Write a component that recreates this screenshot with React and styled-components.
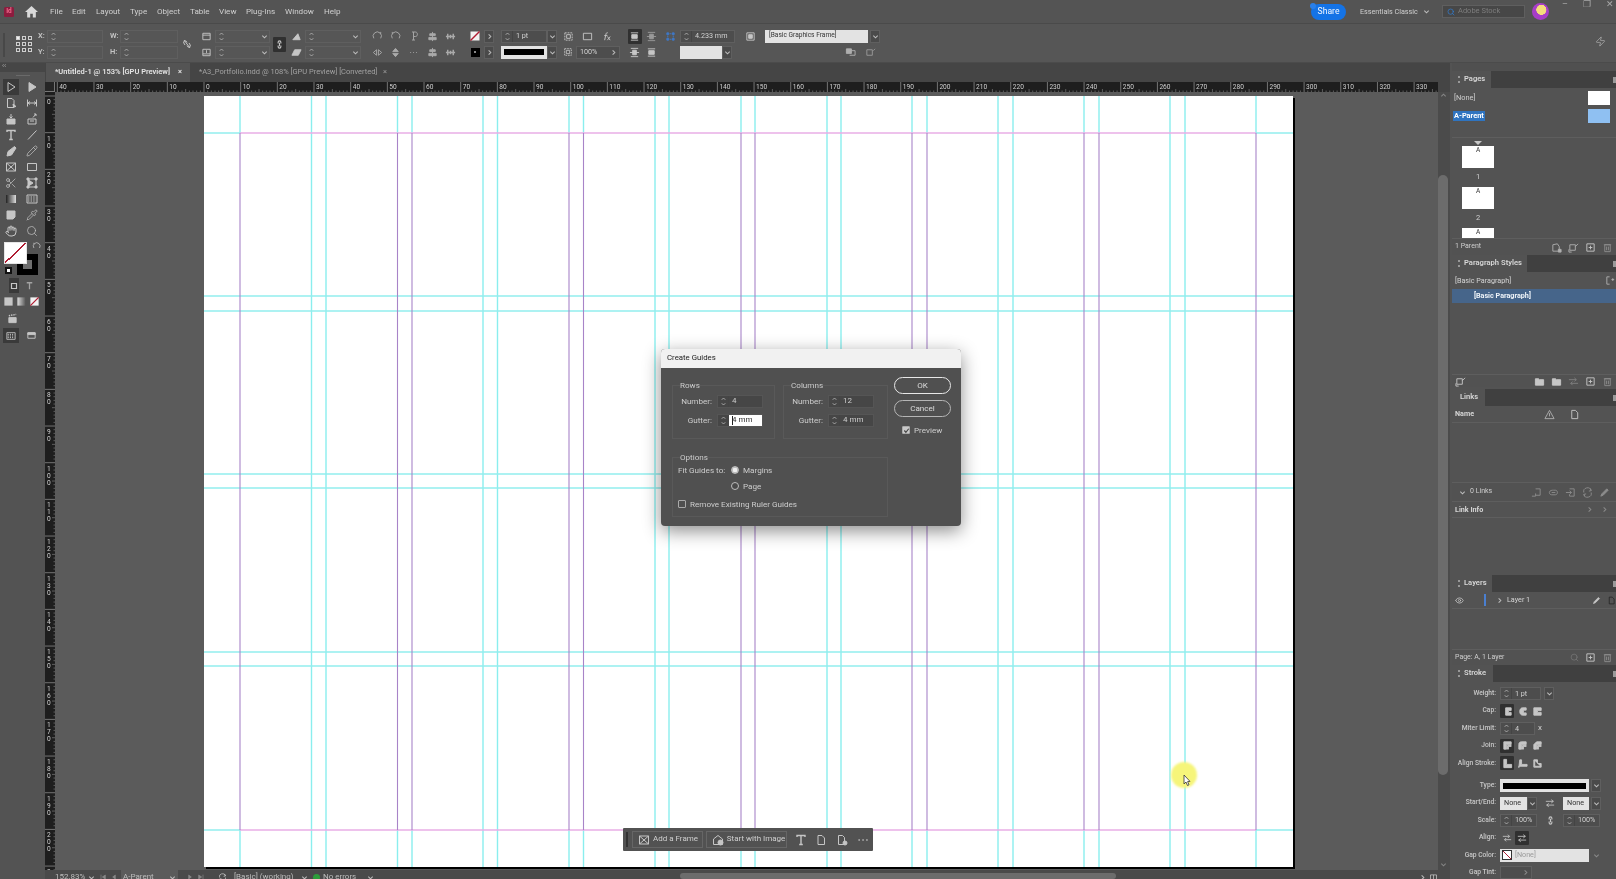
import React from "react";
import styled, { createGlobalStyle } from "styled-components";
import { Scissors, Pipette, Hand, Search, Pencil, Eye, Zap } from "lucide-react";

const GlobalStyle = createGlobalStyle`
  html, body { margin: 0; padding: 0; background: #535353; overflow: hidden; }
  * { box-sizing: border-box; }
`;

// page geometry, taken from the rulers: 297 x 210 mm at 3.667px per mm
const PX_PER_MM = 3.667;
const PAGE_W = 1089;
const PAGE_H = 771;
const MARGIN = { left: 36, right: 1052, top: 37, bottom: 734 };
const ROW_GUIDES = [200, 215, 378, 392, 556, 570];
const COL_GUIDES = [107.5, 122, 279, 293.5, 451, 465, 623, 637, 794, 809, 966, 981];
const PURPLE_GUIDES = [36, 193.5, 208, 365, 379.5, 537, 551, 708, 723, 880, 895, 1052];

const MENU = [
  ["File", 50], ["Edit", 72], ["Layout", 96], ["Type", 130], ["Object", 157],
  ["Table", 190], ["View", 219], ["Plug-Ins", 246], ["Window", 285], ["Help", 324],
];

const glyphs = {
  home: <path d="M6 1 L12 6.5 H10 V11.5 H7.2 V8 H4.8 V11.5 H2 V6.5 H0 Z" fill="currentColor" stroke="none" />,
  select: <path d="M3 1.5 V10.5 L10 6 Z" />,
  direct: <path d="M3 1.5 V10.5 L10 6 Z" fill="currentColor" />,
  page: <><path d="M2.5 1.5 H7 L9 3.5 V10.5 H2.5 Z" /><path d="M8 7 L11 9.5 L8.5 10 Z" fill="currentColor" /></>,
  gap: <path d="M1.5 2.5 V9.5 M10.5 2.5 V9.5 M2 6 H10 M2 6 L4 4.5 M2 6 L4 7.5 M10 6 L8 4.5 M10 6 L8 7.5" />,
  collect: <><path d="M2 6 H10 V11 H2 Z" fill="currentColor" /><path d="M6 1 V5 M4.5 3.5 L6 5 L7.5 3.5" /></>,
  place: <><path d="M2 6 H10 V11 H2 Z M4 8 H8" /><path d="M7 4.5 L10 1 M8 1 H10 V3" /></>,
  type: <path d="M2 3 V1.5 H10 V3 M6 1.5 V10.5 M4.2 10.5 H7.8" strokeWidth="1.4" />,
  line: <path d="M2 10.5 L10.5 1.5" />,
  pen: <path d="M9.5 1.5 L11 3 L6.5 10 L2 11 L3 6.5 Z" fill="currentColor" />,
  frameX: <path d="M1.5 2 H10.5 V10 H1.5 Z M1.5 2 L10.5 10 M10.5 2 L1.5 10" />,
  rect: <path d="M1.5 2.5 H10.5 V9.5 H1.5 Z" />,
  free: <><path d="M2 2 H10 V10 H2 Z" /><path d="M1 1 H3 V3 H1 Z M9 9 H11 V11 H9 Z M9 1 H11 V3 H9 Z M1 9 H3 V11 H1 Z" fill="currentColor" /><path d="M2.5 3 L7 6 L2.5 9 Z" fill="currentColor" /></>,
  gradient: <><defs><linearGradient id="grad"><stop offset="0" stopColor="#222" /><stop offset="1" stopColor="#ddd" /></linearGradient></defs><rect x="1" y="2" width="10" height="8" fill="url(#grad)" stroke="none" /></>,
  feather: <><path d="M1 2 H11 V10 H1 Z" /><path d="M2 4 H10 M2 6 H10 M2 8 H10" strokeDasharray="1.4 1.2" strokeWidth="1.2" /></>,
  note: <path d="M2 2 H10 V8 L8 10 H2 Z" fill="currentColor" />,
  normal: <path d="M3 3 H9 V9 H3 Z" strokeWidth="1.4" />,
  t: <path d="M3 3 H9 M6 3 V10" strokeWidth="1.4" />,
  solid: <rect x="1.5" y="1.5" width="9" height="9" fill="currentColor" stroke="none" />,
  grad2: <><defs><linearGradient id="grad2"><stop offset="0" stopColor="#ddd" /><stop offset="1" stopColor="#555" /></linearGradient></defs><rect x="1.5" y="1.5" width="9" height="9" fill="url(#grad2)" stroke="none" /></>,
  none: <><rect x="1.5" y="1.5" width="9" height="9" fill="#f2f2f2" stroke="none" /><path d="M1.5 10.5 L10.5 1.5" stroke="#b01c32" strokeWidth="1.4" /></>,
  clap: <><path d="M2 5 H10 V10.5 H2 Z" fill="currentColor" /><path d="M2 3 L10 1.5" strokeDasharray="1.5 1" strokeWidth="1.6" /></>,
  view: <><path d="M2 3 H10 V9 H2 Z" /><path d="M2 3 H10 V5 H2 Z" fill="currentColor" /></>,
  unlink: <path d="M3 2 L9 10 M4 7 L2.8 5 C2 3.6 4 2 5.2 3.2 L6 4.4 M8 5 L9.2 7 C10 8.4 8 10 6.8 8.8 L6 7.6" />,
  chain: <path d="M4.5 5 V3.5 C4.5 1.5 7.5 1.5 7.5 3.5 V5 M4.5 7 V8.5 C4.5 10.5 7.5 10.5 7.5 8.5 V7 M6 4 V8" strokeWidth="1.2" />,
  box: <><path d="M2 2.5 H10 V9.5 H2 Z" /><path d="M2 4.5 H10" /></>,
  boxDown: <><path d="M2 2.5 H10 V9.5 H2 Z" /><path d="M2 7.5 H10 M6 3.5 V6.5" /></>,
  shear: <path d="M4 3 H11 L8 9 H1 Z" fill="currentColor" />,
  angle: <path d="M2 9.5 H10 L7.5 3 Z" fill="currentColor" />,
  rotR: <path d="M2 8 A4.5 4.5 0 1 1 9.5 8 M9.5 3 V1" />,
  rotL: <path d="M10 8 A4.5 4.5 0 1 0 2.5 8 M2.5 3 V1" />,
  flipH: <path d="M5 3 L1.5 6 L5 9 Z M7 3 L10.5 6 L7 9 Z" />,
  flipV: <path d="M3 5 L6 1.5 L9 5 Z M3 7 L6 10.5 L9 7 Z" fill="currentColor" />,
  p: <path d="M4 2 H7.5 C10 2 10 6.5 7.5 6.5 H5.5 M5.5 2 V10 M4 10 H7" />,
  distrib: <path d="M6 1 V11 M3 3 H9 V5 H3 Z M2 7 H10 V9.5 H2 Z" fill="currentColor" />,
  distrib2: <path d="M1 6 H11 M3 3 V9 M6 4 V8 M9 3 V9" strokeWidth="1.6" />,
  fit: <><path d="M2 2 H10 V10 H2 Z" strokeDasharray="2 1" /><path d="M4 4 H8 V8 H4 Z" /></>,
  fx: <path d="M4 10 L5.5 3 C5.8 1.8 7 1.8 7.5 2 M3.5 5 H7 M7 6 L10 10 M10 6 L7 10" />,
  alignTop: <><path d="M2 2 H10 M2 10 H10" /><path d="M3 4 H9 V8 H3 Z" fill="currentColor" /></>,
  alignMid: <><path d="M1 6 H11 M2 1.5 H10 M2 10.5 H10" /><path d="M4 3.5 H8 V8.5 H4 Z" fill="currentColor" /></>,
  gridBlue: <path d="M2 2 H4 V4 H2 Z M8 2 H10 V4 H8 Z M2 8 H4 V10 H2 Z M8 8 H10 V10 H8 Z M5 3 H7 M5 9 H7 M3 5 V7 M9 5 V7" fill="currentColor" />,
  styleBox: <><path d="M2 2 H10 V10 H2 Z" /><path d="M4 4 H8 V8 H4 Z" fill="currentColor" /></>,
  ovr: <><path d="M1.5 2 H7 V7 H1.5 Z" fill="currentColor" /><path d="M7 4 H11 V9 H5" /></>,
  ovr2: <path d="M2 3 H8 V9 H2 Z M9 4 L11 2" />,
  plus: <><path d="M2 2 H10 V10 H2 Z" /><path d="M6 4 V8 M4 6 H8" /></>,
  trash: <path d="M3 3 H9 V10.5 H3 Z M2 3 H10 M5 5 V9 M7 5 V9" />,
  pageMove: <><path d="M2 3 H8 V9 H2 Z" /><path d="M1 8 L1 11 H4 M8 5 L11 2" /></>,
  addPage: <><path d="M2 3 L7 2 L9 5 V10 H2 Z" /><path d="M8 8 H11 V11 H8 Z" fill="currentColor" /></>,
  folder: <path d="M1.5 3 H5 L6 4 H10.5 V10 H1.5 Z" fill="currentColor" />,
  warn: <><path d="M6 1.5 L11 10.5 H1 Z" /><path d="M6 4.5 V8" /></>,
  doc: <path d="M3 1.5 H7 L9.5 4 V10.5 H3 Z" />,
  docGear: <><path d="M2.5 1.5 H6.5 L8.5 3.5 V10.5 H2.5 Z" /><circle cx="9" cy="9" r="2" fill="currentColor" /></>,
  relink: <path d="M1 10 H5 V7 M5 2 H10 V9 H5" />,
  linkOval: <path d="M1.5 6 C1.5 3.5 5 3.5 6 3.5 H8 C11 3.5 11 8.5 8 8.5 H4 C1.5 8.5 1.5 6 1.5 6 Z M4 6 H8" />,
  gotoLink: <path d="M5 2 H10 V10 H5 V8 M1 6 H7 M5 4 L7 6 L5 8" />,
  refresh: <path d="M2 6 A4 4 0 0 1 10 4 M10 6 A4 4 0 0 1 2 8 M9 1.5 L10 4 L7.5 4.5 M3 10.5 L2 8 L4.5 7.5" />,
  edit: <path d="M2 10 L3 7.5 L8.5 2 L10 3.5 L4.5 9 Z" fill="currentColor" />,
  capButt: <path d="M4 2 H10 V5 H7 V7 H10 V10 H4 Z" fill="currentColor" />,
  capRound: <path d="M10 2 H6 C2 2 2 10 6 10 H10 V7.5 H7 V4.5 H10 Z" fill="currentColor" />,
  capSquare: <path d="M2 2 H10 V5 H6 V7 H10 V10 H2 Z" fill="currentColor" />,
  joinMiter: <path d="M2 2 H10 V5 H5 V10 H2 Z M6 6 H10 V7 H7 V10 H6 Z" fill="currentColor" />,
  joinRound: <path d="M5 2 H10 V5 H5 V10 H2 V5 C2 3 3 2 5 2 Z M6 6 H10 V7 H7 V10 H6 Z" fill="currentColor" />,
  joinBevel: <path d="M5 2 H10 V5 H5 V10 H2 V5 Z M6 6 H10 V7 H7 V10 H6 Z" fill="currentColor" />,
  alignIn: <path d="M2 1.5 H5 V7 H10.5 V10.5 H2 Z" fill="currentColor" />,
  alignCenter: <path d="M3 2 H5 V7 H11 V9 H2 V10.5 Z" fill="currentColor" />,
  alignOut: <path d="M2 2 H6 V6 H10 V10 H2 Z M3 3 V9 H9" fill="currentColor" />,
  swap: <path d="M1 4 H10 M7.5 2 L10 4 L7.5 6 M11 8.5 H2 M4.5 6.5 L2 8.5 L4.5 10.5" />,
  arrows: <path d="M1 4 H9 M7 2 L9 4 L7 6 M11 8 H3 M5 6 L3 8 L5 10" />,
  dots: <path d="M1.5 6 H2.8 M5.4 6 H6.7 M9.3 6 H10.6" strokeWidth="1.6" />,
  image: <><path d="M1.5 5 L6 1.5 L10.5 5 V10.5 H1.5 Z" /><circle cx="8.5" cy="8.5" r="2.5" fill="currentColor" /></>,
  first: <path d="M3 2.5 V9.5 M9.5 3 L5 6 L9.5 9 Z" fill="currentColor" />,
  prev: <path d="M8 3 L4 6 L8 9 Z" fill="currentColor" />,
  next: <path d="M4 3 L8 6 L4 9 Z" fill="currentColor" />,
  last: <path d="M9 2.5 V9.5 M2.5 3 L7 6 L2.5 9 Z" fill="currentColor" />,
  para: <path d="M2 2 V10 M2 2 H5 M2 10 H5 M7 5 H10 M8.5 3.5 V6.5" />,
  splitView: <path d="M2 2.5 H10 V9.5 H2 Z M6 2.5 V9.5" />,
};

const CHEVRONS = {
  down: "M1.5 3 L4 5.5 L6.5 3",
  up: "M1.5 5 L4 2.5 L6.5 5",
  right: "M3 1.5 L5.5 4 L3 6.5",
};

const Svg = styled.svg`
  flex: none;
  display: block;
  color: ${(p) => p.$color || "#c6c6c6"};
  opacity: ${(p) => p.$dim || 1};
`;

const Icon = ({ name, size = 11, color, dim }) => (
  <Svg viewBox="0 0 12 12" width={size} height={size} fill="none" stroke="currentColor" strokeWidth="1" $color={color} $dim={dim}>
    {glyphs[name]}
  </Svg>
);

const Chevron = ({ dir = "down", size = 7, color = "#bdbdbd" }) => (
  <Svg viewBox="0 0 8 8" width={size} height={size} fill="none" stroke="currentColor" strokeWidth="1.2" $color={color}>
    <path d={CHEVRONS[dir]} />
  </Svg>
);

const SpinnerBox = styled.span`
  flex: none;
  width: ${(p) => p.$w || 11}px;
  height: 100%;
  display: flex;
  align-items: center;
  justify-content: center;
  border-right: 1px solid ${(p) => (p.$flat ? "transparent" : "#444")};
`;

const Spinner = ({ w, flat }) => (
  <SpinnerBox $w={w} $flat={flat}>
    <Svg viewBox="0 0 8 12" width="7" height="11" fill="none" stroke="currentColor" strokeWidth="1" $color="#b5b5b5">
      <path d="M2 4 L4 2 L6 4 M2 8 L4 10 L6 8" />
    </Svg>
  </SpinnerBox>
);

/* ---------- shell ---------- */

const Shell = styled.div`
  position: relative;
  width: 1616px;
  height: 879px;
  overflow: hidden;
  display: flex;
  flex-direction: column;
  background: #535353;
  color: #d4d4d4;
  font-family: Roboto, "Noto Sans", sans-serif;
  font-size: 8px;
  line-height: 1.1;
  filter: blur(0.35px);
`;

const MenuBar = styled.div`
  flex: none;
  height: 24px;
  display: flex;
  align-items: center;
  background: #545454;
  border-bottom: 1px solid #4a4a4a;
  padding-left: 4px;
`;

const Logo = styled.div`
  flex: none;
  width: 10px;
  height: 10px;
  border-radius: 1.5px;
  background: #8d1c3e;
  color: #f06a8c;
  font-size: 6.5px;
  font-weight: 700;
  display: flex;
  align-items: center;
  justify-content: center;
`;

const HomeSlot = styled.div`
  margin-left: 11px;
  width: 13px;
`;

const MenuList = styled.nav`
  flex: none;
  width: 320px;
  position: relative;
  height: 12px;
  margin-left: 2px;
`;

const MenuItem = styled.span`
  position: absolute;
  top: 1px;
  left: ${(p) => p.$x - 40}px;
  font-size: 8.1px;
  color: #cfcfcf;
`;

const MenuRight = styled.div`
  margin-left: auto;
  display: flex;
  align-items: center;
  height: 100%;
`;

const ShareBtn = styled.div`
  position: relative;
  width: 35px;
  height: 16px;
  border-radius: 8px;
  background: #1473e6;
  color: #f4f8ff;
  font-size: 8.6px;
  display: flex;
  align-items: center;
  justify-content: center;
  &::before {
    content: "";
    position: absolute;
    left: -1px;
    top: -1px;
    width: 6px;
    height: 6px;
    border-radius: 50%;
    background: #2a80ea;
  }
`;

const WorkspaceMenu = styled.div`
  margin-left: 14px;
  width: 82px;
  display: flex;
  align-items: center;
  justify-content: space-between;
  padding-right: 12px;
  font-size: 7.2px;
  color: #cfcfcf;
  white-space: nowrap;
`;

const StockField = styled.div`
  width: 83px;
  height: 13px;
  background: #474747;
  border: 1px solid #5f5f5f;
  display: flex;
  align-items: center;
  gap: 3px;
  padding-left: 4px;
  font-size: 7.5px;
  color: #7d7d7d;
`;

const Avatar = styled.div`
  margin-left: 7px;
  width: 17px;
  height: 17px;
  border-radius: 50%;
  background: radial-gradient(circle at 55% 40%, #f4dc7c 0 35%, #a73dc8 38%);
`;

const WinBtns = styled.div`
  margin-left: 5px;
  width: 62px;
  height: 10px;
  align-self: flex-start;
  display: flex;
  justify-content: space-between;
  align-items: center;
  padding: 0 2px 0 8px;
  font-size: 9px;
  color: #a8a8a8;
`;

/* ---------- control bar ---------- */

const ControlBar = styled.div`
  flex: none;
  height: 39px;
  display: flex;
  padding: 4px 0 0 3px;
  background: #565656;
  border-bottom: 1px solid #4b4b4b;
`;

const Handle = styled.div`
  width: 2px;
  height: 24px;
  margin-top: 5px;
  background: #484848;
`;

const RefGrid = styled.div`
  margin: 8px 0 0 11px;
  width: 16px;
  height: 16px;
  display: grid;
  grid-template-columns: repeat(3, 4px);
  grid-auto-rows: 4px;
  gap: 2px;
`;

const RefCell = styled.span`
  border: 1px solid #cfcfcf;
  background: ${(p) => (p.$on ? "#eee" : "transparent")};
`;

const CtlCol = styled.div`
  flex: none;
  margin-left: ${(p) => p.$ml || 0}px;
  width: ${(p) => p.$w}px;
  display: grid;
  grid-template-rows: 16px 16px;
  grid-template-columns: ${(p) => p.$cols || "1fr"};
`;

const CtlRow = styled.div`
  display: flex;
  align-items: center;
  gap: ${(p) => p.$gap || 0}px;
  justify-content: ${(p) => p.$justify || "flex-start"};
  padding-right: ${(p) => p.$pr || 0}px;
  font-size: 7.5px;
  font-weight: 600;
  color: #c4c4c4;
`;

const CtlLabel = styled.span`
  flex: none;
  width: ${(p) => p.$w}px;
`;

const CtlCell = styled.div`
  display: flex;
  align-items: center;
  justify-content: center;
  grid-row: ${(p) => (p.$tall ? "1 / 3" : "auto")};
`;

const IconBtn = styled.span`
  flex: none;
  width: ${(p) => p.$w || 14}px;
  height: ${(p) => p.$h || 14}px;
  display: inline-flex;
  align-items: center;
  justify-content: center;
  background: ${(p) => (p.$on ? "#303030" : "transparent")};
  border-radius: 1px;
`;

const MiniField = styled.div`
  flex: ${(p) => (p.$w ? "none" : "1")};
  width: ${(p) => (p.$w ? `${p.$w}px` : "auto")};
  height: 13px;
  margin-left: ${(p) => p.$ml || 0}px;
  padding-right: ${(p) => p.$pr || 0}px;
  display: flex;
  align-items: center;
  justify-content: ${(p) => (p.$end ? "flex-end" : "flex-start")};
  background: ${(p) => (p.$light ? "#e3e3e3" : p.$clear ? "transparent" : "#4d4d4d")};
  border: 1px solid ${(p) => (p.$light ? "#e3e3e3" : "#5f5f5f")};
  color: ${(p) => (p.$light ? "#333" : "#d2d2d2")};
  font-size: 7.2px;
  font-weight: 400;
`;

const FieldText = styled.span`
  flex: 1;
  padding-left: 3px;
  white-space: nowrap;
  font-size: ${(p) => (p.$fs ? `${p.$fs}px` : "inherit")};
  color: ${(p) => p.$color || "inherit"};
`;

const DropBox = styled.span`
  flex: none;
  width: ${(p) => p.$w || 10}px;
  height: 13px;
  margin-left: ${(p) => p.$ml || 0}px;
  display: flex;
  align-items: center;
  justify-content: center;
  background: ${(p) => (p.$clear ? "transparent" : "#4a4a4a")};
  border: 1px solid ${(p) => (p.$clear ? "transparent" : "#5f5f5f")};
`;

const StrokeBar = styled.div`
  flex: 1;
  height: 6px;
  margin: 0 2px;
  background: #000;
`;

const SmallSwatch = styled.span`
  flex: none;
  width: 9px;
  height: 9px;
  background: #000;
  border: 1px solid #000;
  display: flex;
  align-items: center;
  justify-content: center;
  &::after {
    content: "";
    width: 2px;
    height: 2px;
    background: #888;
  }
`;

const FlashSlot = styled.div`
  margin: 8px 10px 0 auto;
`;

/* ---------- middle ---------- */

const Middle = styled.div`
  flex: 1;
  min-height: 0;
  display: flex;
`;

const ToolColumn = styled.aside`
  flex: none;
  width: 45px;
  display: flex;
  flex-direction: column;
  background: #535353;
`;

const CollapseStrip = styled.div`
  height: 9px;
  background: #464646;
  color: #aaa;
  font-size: 7px;
  padding-left: 2px;
`;

const ToolHandle = styled.div`
  height: 7px;
  display: flex;
  align-items: center;
  justify-content: center;
  &::after {
    content: "";
    width: 14px;
    height: 1px;
    background: #6a6a6a;
  }
`;

const ToolRow = styled.div`
  display: grid;
  grid-template-columns: 22px 19px;
  height: 16px;
`;

const ToolBtn = styled.span`
  display: flex;
  align-items: center;
  justify-content: center;
  margin: 0 ${(p) => (p.$on ? 3 : 0)}px;
  background: ${(p) => (p.$on ? "#3a3a3a" : "transparent")};
`;

const ColorWell = styled.div`
  position: relative;
  flex: none;
  height: 36px;
  margin-top: 3px;
`;

const FillBox = styled.div`
  position: absolute;
  z-index: 1;
  left: 4px;
  top: 0;
  width: 23px;
  height: 22px;
  background: linear-gradient(to top left, #fff 48%, #b01c32 48% 53%, #fff 53%);
  border: 1px solid #e6e6e6;
`;

const StrokeBox = styled.div`
  position: absolute;
  left: 17px;
  top: 12px;
  width: 21px;
  height: 21px;
  background: #000;
  display: flex;
  align-items: center;
  justify-content: center;
  &::after {
    content: "";
    width: 9px;
    height: 9px;
    background: #6e6e6e;
  }
`;

const SwapSlot = styled.span`
  position: absolute;
  right: 4px;
  top: 0;
`;

const DefaultSlot = styled.span`
  position: absolute;
  left: 5px;
  top: 25px;
  width: 7px;
  height: 7px;
  background: #fff;
  border: 2px solid #111;
`;

const ModeRow = styled.div`
  flex: none;
  height: 15px;
  display: grid;
  grid-template-columns: ${(p) => p.$cols};
  padding-left: ${(p) => p.$pl || 0}px;
  margin-bottom: ${(p) => p.$mb || 0}px;
`;

const Center = styled.main`
  flex: 1;
  min-width: 0;
  display: flex;
  flex-direction: column;
`;

const TabBar = styled.div`
  flex: none;
  height: 19px;
  display: flex;
  background: #454545;
  padding-left: 1px;
`;

const DocTab = styled.div`
  width: ${(p) => p.$w}px;
  display: flex;
  align-items: center;
  justify-content: space-between;
  padding: 0 8px 0 9px;
  background: ${(p) => (p.$active ? "#545454" : "transparent")};
  color: ${(p) => (p.$active ? "#e4e4e4" : "#a2a2a2")};
  font-size: 7.5px;
  font-weight: ${(p) => (p.$active ? 600 : 400)};
  white-space: nowrap;
`;

const HRulerRow = styled.div`
  flex: none;
  height: 10px;
  display: flex;
  padding-right: 12px;
  background: #454545;
`;

const RulerCorner = styled.div`
  flex: none;
  width: 10px;
  background: #262626;
  border-right: 1px solid #777;
  border-bottom: 1px solid #777;
`;

const RulerStrip = styled.svg`
  flex: 1;
  display: block;
  height: 10px;
  background: #1e1e1e;
`;

const CanvasRow = styled.div`
  flex: 1;
  min-height: 0;
  display: flex;
`;

const VRulerStrip = styled.svg`
  flex: none;
  width: 10px;
  height: 100%;
  display: block;
  background: #1e1e1e;
`;

const Canvas = styled.div`
  flex: 1;
  min-width: 0;
  padding: 4px 0 0 149px;
  background: #5b5b5b;
  overflow: hidden;
`;

const Sheet = styled.div`
  width: ${PAGE_W}px;
  height: ${PAGE_H}px;
  background: #fff;
  box-shadow: 2px 2px 0 #000;
`;

const GuideSvg = styled.svg`
  display: block;
`;

const VScroll = styled.div`
  flex: none;
  width: 12px;
  padding: 0 2px 2px 0;
  background: #4b4b4b;
  display: flex;
  flex-direction: column;
  align-items: center;
`;

const ScrollThumb = styled.div`
  width: 100%;
  margin-top: ${(p) => p.$mt}px;
  margin-bottom: auto;
  height: ${(p) => p.$h}px;
  border-radius: 5px;
  background: #6c6c6c;
`;

const StatusBar = styled.div`
  flex: none;
  height: 9px;
  display: flex;
  overflow: hidden;
  background: #4a4a4a;
  padding-left: 10px;
  color: #bdbdbd;
  font-size: 8px;
`;

const StatusItem = styled.span`
  flex: none;
  width: ${(p) => p.$w}px;
  margin-left: ${(p) => p.$ml || 0}px;
  display: flex;
  align-items: center;
  gap: 3px;
  height: 14px;
  white-space: nowrap;
  background: ${(p) => (p.$field ? "#5b5b5b" : "transparent")};
  padding-left: ${(p) => (p.$field ? 2 : 0)}px;
`;

const GreenDot = styled.span`
  width: 7px;
  height: 7px;
  border-radius: 50%;
  background: #2d9d3a;
`;

const HThumb = styled.div`
  flex: none;
  width: 436px;
  height: 6px;
  margin: 3px 0 0 ${(p) => p.$ml}px;
  border-radius: 3px;
  background: #6c6c6c;
`;

/* ---------- dock ---------- */

const Dock = styled.aside`
  flex: none;
  width: 164px;
  margin-left: 2px;
  display: flex;
  flex-direction: column;
  padding-top: 8px;
  background: #505050;
`;

const Panel = styled.section`
  flex: none;
  height: ${(p) => p.$h}px;
  display: flex;
  flex-direction: column;
  overflow: hidden;
  background: #535353;
`;

const PanelHead = styled.div`
  flex: none;
  height: 17px;
  display: flex;
  justify-content: space-between;
  background: #404040;
`;

const PanelTab = styled.div`
  width: ${(p) => p.$w}px;
  display: flex;
  align-items: center;
  gap: 3px;
  padding-left: ${(p) => p.$pl || 5}px;
  background: #535353;
  font-size: 7.6px;
  font-weight: 600;
  color: #d8d8d8;
  white-space: nowrap;
`;

const HeadMenu = styled.span`
  width: 3px;
  height: 6px;
  margin-top: 6px;
  background: #9a9a9a;
`;

const Updown = styled.span`
  flex: none;
  width: 4px;
  height: 7px;
  display: block;
  background:
    linear-gradient(#999, #999) center top / 2px 2px no-repeat,
    linear-gradient(#999, #999) center bottom / 2px 2px no-repeat;
`;

const ParentRow = styled.div`
  display: flex;
  justify-content: space-between;
  align-items: center;
  height: ${(p) => p.$h}px;
  margin-top: ${(p) => p.$mt || 0}px;
  padding: 0 6px 0 1px;
  font-size: 7.4px;
`;

const ParentName = styled.span`
  padding: 1px;
  background: ${(p) => (p.$on ? "#2f74c0" : "transparent")};
  color: ${(p) => (p.$on ? "#fff" : "#cfcfcf")};
  font-weight: ${(p) => (p.$on ? 700 : 400)};
`;

const ParentThumb = styled.span`
  width: 22px;
  height: 14px;
  background: ${(p) => p.$color};
`;

const PagesArea = styled.div`
  flex: 1;
  min-height: 0;
  overflow: hidden;
  margin-top: 12px;
  padding: 3px 0 0 10px;
  border-top: 1px solid #5e5e5e;
`;

const PageMarker = styled.div`
  width: 0;
  height: 0;
  margin: 0 0 1px 12px;
  border-left: 4px solid transparent;
  border-right: 4px solid transparent;
  border-top: 4px solid #c8c8c8;
`;

const PageThumb = styled.div`
  width: 32px;
  height: 22px;
  background: #fff;
  color: #333;
  font-size: 6.5px;
  text-align: center;
  padding-top: 1px;
`;

const PageNum = styled.div`
  width: 32px;
  height: 19px;
  display: flex;
  align-items: center;
  justify-content: center;
  font-size: 7.5px;
  color: #cfcfcf;
`;

const PanelFoot = styled.div`
  flex: none;
  height: ${(p) => p.$h || 17}px;
  margin-bottom: ${(p) => p.$mb || 0}px;
  display: flex;
  align-items: center;
  gap: 2px;
  justify-content: space-between;
  padding-left: 3px;
  background: #525252;
  border-top: 1px solid #5e5e5e;
  font-size: 7px;
  color: #cfcfcf;
`;

const FootIcons = styled.div`
  display: flex;
  align-items: center;
  gap: ${(p) => p.$gap || 6}px;
  margin-right: ${(p) => p.$mr ?? 3}px;
`;

const ListRow = styled.div`
  flex: none;
  height: ${(p) => p.$h || 15}px;
  display: flex;
  align-items: center;
  justify-content: space-between;
  padding-left: ${(p) => p.$pl || 3}px;
  background: ${(p) => (p.$on ? "#46658a" : "transparent")};
  border-top: ${(p) => (p.$ruleTop ? "1px solid #5e5e5e" : "none")};
  border-bottom: ${(p) => (p.$rule ? "1px solid #5e5e5e" : "none")};
  font-size: 7.2px;
  font-weight: ${(p) => (p.$bold ? 700 : 400)};
  color: ${(p) => (p.$on ? "#eef3f8" : "#d6d6d6")};
`;

const Spacer = styled.div`
  flex: ${(p) => (p.$h ? "none" : "1")};
  height: ${(p) => (p.$h ? `${p.$h}px` : "auto")};
`;

const LayerSwatch = styled.span`
  width: 2px;
  height: 12px;
  margin: 0 6px 0 16px;
  background: #4a7fd0;
`;

const LayerName = styled.span`
  display: flex;
  align-items: center;
  gap: 4px;
  padding-left: ${(p) => p.$pl || 0}px;
`;

const StrokeBody = styled.div`
  flex: 1;
  padding-top: 3px;
`;

const StrokeRow = styled.div`
  height: 17.4px;
  display: grid;
  grid-template-columns: 44px 1fr;
  column-gap: 4px;
  align-items: center;
  margin-top: ${(p) => p.$mt || 0}px;
`;

const StrokeLabel = styled.label`
  text-align: right;
  font-size: 6.7px;
  font-weight: 500;
  color: #c8c8c8;
  white-space: nowrap;
`;

const StrokeCtl = styled.div`
  display: flex;
  align-items: center;
  gap: ${(p) => p.$gap || 0}px;
`;

const GapSwatch = styled.span`
  flex: none;
  width: 10px;
  height: 10px;
  margin-left: 1px;
  background: linear-gradient(to top right, #fff 44%, #b01c32 44% 56%, #fff 56%);
  border: 1px solid #333;
`;

/* ---------- overlays ---------- */

const Dialog = styled.div`
  position: absolute;
  left: 661px;
  top: 349px;
  width: 300px;
  height: 177px;
  border-radius: 4px;
  overflow: hidden;
  background: #505050;
  box-shadow: 0 5px 18px rgba(0, 0, 0, 0.45);
`;

const DialogTitle = styled.div`
  height: 19px;
  display: flex;
  align-items: center;
  padding-left: 6px;
  background: #f1f1f1;
  color: #222;
  font-size: 7.8px;
`;

const DialogBody = styled.div`
  display: flex;
  padding: 11px 0 0 11px;
  gap: 6px;
  font-size: 8.1px;
  color: #cdcdcd;
`;

const DialogLeft = styled.div`
  width: 216px;
`;

const GroupRow = styled.div`
  display: flex;
  gap: 8px;
`;

const Group = styled.fieldset`
  flex: none;
  width: ${(p) => p.$w}px;
  min-width: 0;
  margin: ${(p) => p.$mt || 0}px 0 0;
  padding: ${(p) => p.$pt || 0}px 0 ${(p) => p.$pb ?? 8}px;
  border: 1px solid #595959;
`;

const Legend = styled.legend`
  padding: 0;
  margin-left: 7px;
  font-size: 8.1px;
  line-height: 12px;
  color: #cdcdcd;
`;

const FormRow = styled.div`
  display: flex;
  align-items: center;
  height: 19px;
`;

const FormLabel = styled.span`
  width: 39px;
  margin-right: 5px;
  text-align: right;
`;

const DlgField = styled.div`
  width: 46px;
  height: 13px;
  display: flex;
  align-items: center;
  background: #464646;
  border: 1px solid #555;
`;

const DlgInput = styled.span`
  flex: 1;
  height: 100%;
  display: flex;
  align-items: center;
  padding-left: 3px;
  background: ${(p) => (p.$active ? "#fff" : "transparent")};
  color: ${(p) => (p.$active ? "#333" : "#cdcdcd")};
  font-size: 8px;
`;

const Caret = styled.span`
  width: 1px;
  height: 9px;
  margin-right: -1px;
  background: #222;
`;

const OptionRow = styled.div`
  height: 16px;
  display: flex;
  align-items: center;
  padding-left: ${(p) => p.$pl || 0}px;
  margin-top: ${(p) => p.$mt || 0}px;
`;

const OptionLabel = styled.span`
  width: 53px;
  white-space: nowrap;
`;

const Radio = styled.span`
  width: 8px;
  height: 8px;
  margin-right: 4px;
  border-radius: 50%;
  border: 1px solid #bdbdbd;
  background: ${(p) => (p.$on ? "radial-gradient(circle, #eee 0 2px, #bdbdbd 2.5px)" : "#4a4a4a")};
`;

const Check = styled.span`
  flex: none;
  width: 8px;
  height: 8px;
  margin-right: 4px;
  border: 1px solid #aaa;
  border-radius: 1px;
  background: ${(p) => (p.$on ? "#c9c9c9" : "transparent")};
  display: flex;
  align-items: center;
  justify-content: center;
`;

const DialogButtons = styled.div`
  width: 57px;
  margin-top: -2px;
  display: flex;
  flex-direction: column;
`;

const DlgButton = styled.div`
  height: 17px;
  margin-bottom: 6px;
  border-radius: 9px;
  border: ${(p) => (p.$primary ? "1.5px solid #e8e8e8" : "1px solid #b5b5b5")};
  display: flex;
  align-items: center;
  justify-content: center;
  color: #dcdcdc;
`;

const PreviewRow = styled.div`
  height: 12px;
  margin-top: 1px;
  padding-left: 8px;
  display: flex;
  align-items: center;
`;

const FloatBar = styled.div`
  position: absolute;
  left: 623px;
  top: 828px;
  width: 250px;
  height: 23px;
  display: flex;
  align-items: center;
  padding-left: 3px;
  background: #525252;
  color: #d0d0d0;
  font-size: 8px;
  border-radius: 1px;
`;

const FloatHandle = styled.span`
  width: 2px;
  height: 15px;
  margin-right: 4px;
  background: #333;
`;

const FloatButton = styled.span`
  height: 17px;
  width: ${(p) => p.$w}px;
  margin-right: 3px;
  display: flex;
  align-items: center;
  gap: 3px;
  padding-left: 5px;
  border: 1px solid #666;
  white-space: nowrap;
`;

const FloatIcon = styled.span`
  width: 21px;
  display: flex;
  justify-content: center;
`;

const CursorSpot = styled.div`
  position: absolute;
  left: 1171px;
  top: 762px;
  width: 26px;
  height: 26px;
  border-radius: 50%;
  background: #f6f57a;
  filter: blur(0.8px);
`;

const CursorArrow = styled.svg`
  position: absolute;
  left: 1183px;
  top: 774px;
`;

/* ---------- small pieces ---------- */

const HorizontalRuler = () => {
  const origin = 204 - 55;
  const labels = [];
  const ticks = [];
  for (let mm = -40; mm <= 330; mm += 10) {
    const x = origin + mm * PX_PER_MM;
    labels.push(
      <g key={mm}>
        <line x1={x} x2={x} y1="0" y2="10" stroke="#999" strokeWidth="0.7" />
        <text x={x + 2} y="6.5" fontSize="6.6" fill="#d0d0d0" fontFamily="Roboto">{Math.abs(mm)}</text>
      </g>
    );
    for (let k = 1; k < 10; k++) {
      ticks.push(<line key={`${mm}-${k}`} x1={x + k * PX_PER_MM} x2={x + k * PX_PER_MM} y1={k === 5 ? 7 : 8.5} y2="10" stroke="#8a8a8a" strokeWidth="0.6" />);
    }
  }
  return <RulerStrip>{ticks}{labels}</RulerStrip>;
};

const VerticalRuler = () => {
  const labels = [];
  const ticks = [];
  for (let mm = 0; mm <= 210; mm += 10) {
    const y = 4 + mm * PX_PER_MM;
    const digits = String(mm).split("");
    labels.push(
      <g key={mm}>
        <line x1="0" x2="10" y1={y} y2={y} stroke="#999" strokeWidth="0.7" />
        {digits.map((d, i) => (
          <text key={i} x="2" y={y + 8 + i * 7} fontSize="6.6" fill="#d0d0d0" fontFamily="Roboto">{d}</text>
        ))}
      </g>
    );
    for (let k = 1; k < 10; k++) {
      ticks.push(<line key={`${mm}-${k}`} x1={k === 5 ? 7 : 8.5} x2="10" y1={y + k * PX_PER_MM} y2={y + k * PX_PER_MM} stroke="#8a8a8a" strokeWidth="0.6" />);
    }
  }
  return <VRulerStrip>{ticks}{labels}</VRulerStrip>;
};

const Guides = () => (
  <GuideSvg width={PAGE_W} height={PAGE_H}>
    {COL_GUIDES.map((x) => (
      <line key={x} x1={x} x2={x} y1="0" y2={PAGE_H} stroke="#8aeeee" strokeWidth="1.4" />
    ))}
    {PURPLE_GUIDES.map((x) => (
      <g key={x}>
        <line x1={x} x2={x} y1="0" y2={MARGIN.top} stroke="#8aeeee" strokeWidth="1.4" />
        <line x1={x} x2={x} y1={MARGIN.bottom} y2={PAGE_H} stroke="#8aeeee" strokeWidth="1.4" />
      </g>
    ))}
    {ROW_GUIDES.map((y) => (
      <line key={y} x1="0" x2={PAGE_W} y1={y} y2={y} stroke="#92eeee" strokeWidth="1.4" />
    ))}
    {[MARGIN.top, MARGIN.bottom].map((y) => (
      <g key={y}>
        <line x1="0" x2={MARGIN.left} y1={y} y2={y} stroke="#92eeee" strokeWidth="1.4" />
        <line x1={MARGIN.right} x2={PAGE_W} y1={y} y2={y} stroke="#92eeee" strokeWidth="1.4" />
        <line x1={MARGIN.left} x2={MARGIN.right} y1={y} y2={y} stroke="#e8aee6" strokeWidth="1.6" />
      </g>
    ))}
    {PURPLE_GUIDES.map((x) => (
      <line key={x} x1={x} x2={x} y1={MARGIN.top} y2={MARGIN.bottom} stroke="#a884c8" strokeWidth="1.1" />
    ))}
  </GuideSvg>
);

const CtlField = ({ label, labelW, w }) => (
  <CtlRow>
    <CtlLabel $w={labelW}>{label}</CtlLabel>
    <MiniField $clear $w={w}>
      <Spinner flat />
    </MiniField>
  </CtlRow>
);

const CtlCombo = ({ icon }) => (
  <CtlRow $gap={3}>
    <Icon name={icon} />
    <MiniField $clear>
      <Spinner flat />
      <FieldText />
      <DropBox $clear><Chevron /></DropBox>
    </MiniField>
  </CtlRow>
);

const DlgSpin = ({ label, value, active }) => (
  <FormRow>
    <FormLabel>{label}</FormLabel>
    <DlgField>
      <Spinner w={11} />
      <DlgInput $active={active}>
        {active && <Caret />}
        {value}
      </DlgInput>
    </DlgField>
  </FormRow>
);

const TOOLS = [
  [["select", true], ["direct"]],
  [["page"], ["gap"]],
  [["collect"], ["place"]],
  [["type"], ["line"]],
  [["pen"], ["pencil"]],
  [["frameX"], ["rect"]],
  [["scissors"], ["free"]],
  [["gradient"], ["feather"]],
  [["note"], ["pipette"]],
  [["hand"], ["zoom"]],
];

const toolIcon = (name) => {
  if (name === "pencil") return <Pencil size={12} color="#c6c6c6" strokeWidth={1.4} />;
  if (name === "scissors") return <Scissors size={12} color="#c6c6c6" strokeWidth={1.4} />;
  if (name === "pipette") return <Pipette size={12} color="#c6c6c6" strokeWidth={1.4} />;
  if (name === "hand") return <Hand size={12} color="#d6d6d6" strokeWidth={1.8} />;
  if (name === "zoom") return <Search size={12} color="#c6c6c6" strokeWidth={1.4} />;
  return <Icon name={name} size={12} />;
};

const ICON_ROW_A = ["rotR", "rotL", "p", "distrib", "distrib2"];
const ICON_ROW_B = ["flipH", "flipV", "p", "distrib", "distrib2"];

export default function App() {
  return (
    <Shell>
      <GlobalStyle />
      <MenuBar>
        <Logo>Id</Logo>
        <HomeSlot><Icon name="home" size={13} color="#d9d9d9" /></HomeSlot>
        <MenuList>
          {MENU.map(([name, x]) => <MenuItem key={name} $x={x}>{name}</MenuItem>)}
        </MenuList>
        <MenuRight>
          <ShareBtn>Share</ShareBtn>
          <WorkspaceMenu>Essentials Classic <Chevron /></WorkspaceMenu>
          <StockField>
            <Search size={8} color="#2f7fd8" strokeWidth={2} />
            Adobe Stock
          </StockField>
          <Avatar />
          <WinBtns><span>–</span><span>❐</span><span>✕</span></WinBtns>
        </MenuRight>
      </MenuBar>

      <ControlBar>
        <Handle />
        <RefGrid>
          {Array.from({ length: 9 }).map((_, i) => <RefCell key={i} $on={i === 0} />)}
        </RefGrid>
        <CtlCol $w={67} $ml={6}>
          <CtlField label="X:" labelW={9} w={56} />
          <CtlField label="Y:" labelW={9} w={56} />
        </CtlCol>
        <CtlCol $w={70} $ml={5}>
          <CtlField label="W:" labelW={10} w={58} />
          <CtlField label="H:" labelW={10} w={58} />
        </CtlCol>
        <CtlCol $w={14}>
          <CtlCell $tall><Icon name="unlink" size={12} /></CtlCell>
        </CtlCol>
        <CtlCol $w={69} $ml={7}>
          <CtlCombo icon="box" />
          <CtlCombo icon="boxDown" />
        </CtlCol>
        <CtlCol $w={13} $ml={3}>
          <CtlCell $tall><IconBtn $on $w={13} $h={15}><Icon name="chain" size={11} /></IconBtn></CtlCell>
        </CtlCol>
        <CtlCol $w={70} $ml={5}>
          <CtlCombo icon="angle" />
          <CtlCombo icon="shear" />
        </CtlCol>
        <CtlCol $w={92} $ml={7} $cols="repeat(5, 1fr)">
          {ICON_ROW_A.concat(ICON_ROW_B).map((n, i) => (
            <CtlCell key={i}>
              {n === "p" ? (i === 2 ? <Icon name="p" size={12} dim={0.7} /> : <Icon name="dots" size={9} dim={0.6} />) : <Icon name={n} dim={0.75} />}
            </CtlCell>
          ))}
        </CtlCol>
        <CtlCol $w={26} $ml={9}>
          <CtlRow $gap={3}><Icon name="none" size={12} /><DropBox><Chevron dir="right" /></DropBox></CtlRow>
          <CtlRow $gap={3}><IconBtn $w={12} $h={11}><SmallSwatch /></IconBtn><DropBox><Chevron dir="right" /></DropBox></CtlRow>
        </CtlCol>
        <CtlCol $w={56} $ml={6}>
          <CtlRow>
            <MiniField $w={46}><Spinner /><FieldText>1 pt</FieldText></MiniField>
            <DropBox><Chevron /></DropBox>
          </CtlRow>
          <CtlRow>
            <MiniField $light $w={46}><StrokeBar /></MiniField>
            <DropBox><Chevron /></DropBox>
          </CtlRow>
        </CtlCol>
        <CtlCol $w={57} $ml={6}>
          <CtlRow $justify="space-between" $pr={8}><Icon name="fit" /><Icon name="rect" /><Icon name="fx" /></CtlRow>
          <CtlRow $gap={3}><Icon name="fit" size={10} /><MiniField $pr={2}><FieldText>100%</FieldText><Chevron dir="right" /></MiniField></CtlRow>
        </CtlCol>
        <CtlCol $w={34} $ml={6} $cols="1fr 1fr">
          <CtlCell><IconBtn $on $w={14} $h={15}><Icon name="alignTop" /></IconBtn></CtlCell>
          <CtlCell><Icon name="alignMid" dim={0.6} /></CtlCell>
          <CtlCell><Icon name="alignMid" /></CtlCell>
          <CtlCell><Icon name="alignTop" /></CtlCell>
        </CtlCol>
        <CtlCol $w={70} $ml={5}>
          <CtlRow $gap={4}>
            <Icon name="gridBlue" color="#3f78c6" />
            <MiniField><Spinner /><FieldText>4.233 mm</FieldText></MiniField>
          </CtlRow>
          <CtlRow>
            <MiniField $light $w={42} $ml={15} />
            <DropBox><Chevron /></DropBox>
          </CtlRow>
        </CtlCol>
        <CtlCol $w={136} $ml={10}>
          <CtlRow $gap={9}>
            <Icon name="styleBox" />
            <MiniField $light $w={103}><FieldText $fs={6.6}>[Basic Graphics Frame]</FieldText></MiniField>
            <DropBox $ml={-7}><Chevron /></DropBox>
          </CtlRow>
          <CtlRow $gap={9} $justify="flex-end" $pr={5}>
            <Icon name="ovr" dim={0.8} />
            <Icon name="ovr2" dim={0.6} />
          </CtlRow>
        </CtlCol>
        <FlashSlot><Zap size={11} color="#b9b9b9" strokeWidth={1.4} /></FlashSlot>
      </ControlBar>

      <Middle>
        <ToolColumn>
          <CollapseStrip>‹‹</CollapseStrip>
          <ToolHandle />
          <div>
            {TOOLS.map((pair, i) => (
              <ToolRow key={i}>
                {pair.map(([name, on]) => <ToolBtn key={name} $on={on}>{toolIcon(name)}</ToolBtn>)}
              </ToolRow>
            ))}
          </div>
          <ColorWell>
            <FillBox />
            <StrokeBox />
            <SwapSlot><Icon name="rotL" size={9} /></SwapSlot>
            <DefaultSlot />
          </ColorWell>
          <ModeRow $cols="16px 14px" $pl={6} $mb={1}>
            <ToolBtn $on><Icon name="normal" size={10} /></ToolBtn>
            <ToolBtn><Icon name="t" size={11} dim={0.7} /></ToolBtn>
          </ModeRow>
          <ModeRow $cols="13px 13px 13px" $pl={2} $mb={2}>
            <ToolBtn><Icon name="solid" size={11} /></ToolBtn>
            <ToolBtn><Icon name="grad2" size={11} /></ToolBtn>
            <ToolBtn><Icon name="none" size={11} /></ToolBtn>
          </ModeRow>
          <ModeRow $cols="24px" $mb={2}>
            <ToolBtn><Icon name="clap" size={11} /></ToolBtn>
          </ModeRow>
          <ModeRow $cols="22px 19px">
            <ToolBtn $on><Icon name="feather" size={10} /></ToolBtn>
            <ToolBtn><Icon name="view" size={11} /></ToolBtn>
          </ModeRow>
        </ToolColumn>

        <Center>
          <TabBar>
            <DocTab $active $w={144}>*Untitled-1 @ 153% [GPU Preview] <span>×</span></DocTab>
            <DocTab $w={205}>*A3_Portfolio.indd @ 108% [GPU Preview] [Converted] <span>×</span></DocTab>
          </TabBar>
          <HRulerRow>
            <RulerCorner />
            <HorizontalRuler />
          </HRulerRow>
          <CanvasRow>
            <VerticalRuler />
            <Canvas>
              <Sheet><Guides /></Sheet>
            </Canvas>
            <VScroll>
              <Chevron dir="up" color="#858585" />
              <ScrollThumb $mt={76} $h={600} />
              <Chevron color="#858585" />
            </VScroll>
          </CanvasRow>
          <StatusBar>
            <StatusItem $w={44}>152.83% <Chevron /></StatusItem>
            <StatusItem $w={22}><Icon name="first" size={8} dim={0.5} /><Icon name="prev" size={8} dim={0.5} /></StatusItem>
            <StatusItem $w={46} $field>A-Parent</StatusItem>
            <StatusItem $w={11} $field><Chevron /></StatusItem>
            <StatusItem $w={32} $ml={8}><Icon name="next" size={8} dim={0.5} /><Icon name="last" size={8} dim={0.5} /></StatusItem>
            <StatusItem $w={16}><Icon name="refresh" size={9} /></StatusItem>
            <StatusItem $w={67}>[Basic] (working)</StatusItem>
            <StatusItem $w={12}><Chevron /></StatusItem>
            <StatusItem $w={54}><GreenDot />No errors</StatusItem>
            <StatusItem $w={12}><Chevron /></StatusItem>
            <HThumb $ml={301} />
            <StatusItem $w={24} $ml={303}><Chevron dir="right" /><Icon name="splitView" size={9} /></StatusItem>
          </StatusBar>
        </Center>

        <Dock>
          <Panel $h={184}>
            <PanelHead>
              <PanelTab $w={39}><Updown />Pages</PanelTab>
              <HeadMenu />
            </PanelHead>
            <ParentRow $h={18} $mt={1}><ParentName>[None]</ParentName><ParentThumb $color="#fff" /></ParentRow>
            <ParentRow $h={18}><ParentName $on>A-Parent</ParentName><ParentThumb $color="#8fc0f2" /></ParentRow>
            <PagesArea>
              <PageMarker />
              <PageThumb>A</PageThumb>
              <PageNum>1</PageNum>
              <PageThumb>A</PageThumb>
              <PageNum>2</PageNum>
              <PageThumb>A</PageThumb>
            </PagesArea>
            <PanelFoot>
              1 Parent
              <FootIcons>
                <Icon name="addPage" dim={0.8} />
                <Icon name="pageMove" dim={0.8} />
                <Icon name="plus" />
                <Icon name="trash" dim={0.5} />
              </FootIcons>
            </PanelFoot>
          </Panel>

          <Panel $h={134}>
            <PanelHead>
              <PanelTab $w={75}><Updown />Paragraph Styles</PanelTab>
              <HeadMenu />
            </PanelHead>
            <ListRow $h={17} $pl={3}>[Basic Paragraph]<Icon name="para" dim={0.8} /></ListRow>
            <ListRow $on $h={14} $pl={22} $bold>[Basic Paragraph]</ListRow>
            <Spacer />
            <PanelFoot $h={13} $mb={2}>
              <Icon name="pageMove" />
              <FootIcons>
                <Icon name="folder" />
                <Icon name="folder" />
                <Icon name="arrows" dim={0.4} />
                <Icon name="plus" />
                <Icon name="trash" dim={0.5} />
              </FootIcons>
            </PanelFoot>
          </Panel>

          <Panel $h={186}>
            <PanelHead>
              <PanelTab $w={33} $pl={8}>Links</PanelTab>
              <HeadMenu />
            </PanelHead>
            <ListRow $h={17} $rule $bold>
              Name
              <FootIcons $mr={36} $gap={14}>
                <Icon name="warn" dim={0.8} />
                <Icon name="doc" />
              </FootIcons>
            </ListRow>
            <Spacer $h={59} />
            <PanelFoot $h={19}>
              <LayerName $pl={4}><Chevron />0 Links</LayerName>
              <FootIcons $mr={6}>
                <Icon name="relink" dim={0.5} />
                <Icon name="linkOval" dim={0.5} />
                <Icon name="gotoLink" dim={0.5} />
                <Icon name="refresh" dim={0.5} />
                <Icon name="edit" dim={0.5} />
              </FootIcons>
            </PanelFoot>
            <ListRow $h={17} $rule $ruleTop $bold>
              Link Info
              <FootIcons $mr={8} $gap={8}>
                <Chevron dir="right" color="#8a8a8a" />
                <Chevron dir="right" color="#8a8a8a" />
              </FootIcons>
            </ListRow>
            <Spacer />
          </Panel>

          <Panel $h={90}>
            <PanelHead>
              <PanelTab $w={40}><Updown />Layers</PanelTab>
              <HeadMenu />
            </PanelHead>
            <ListRow $h={17} $rule>
              <LayerName>
                <Eye size={9} color="#c8c8c8" />
                <LayerSwatch />
                <Chevron dir="right" />
                Layer 1
              </LayerName>
              <FootIcons $mr={0}>
                <Icon name="edit" size={9} />
                <Icon name="doc" size={9} color="#222" />
              </FootIcons>
            </ListRow>
            <Spacer />
            <PanelFoot $h={16}>
              Page: A, 1 Layer
              <FootIcons>
                <Search size={9} color="#777" />
                <Icon name="plus" />
                <Icon name="trash" dim={0.5} />
              </FootIcons>
            </PanelFoot>
          </Panel>

          <Panel $h={214}>
            <PanelHead>
              <PanelTab $w={41}><Updown />Stroke</PanelTab>
              <HeadMenu />
            </PanelHead>
            <StrokeBody>
              <StrokeRow>
                <StrokeLabel>Weight:</StrokeLabel>
                <StrokeCtl $gap={3}><MiniField $w={41}><Spinner /><FieldText>1 pt</FieldText></MiniField><DropBox><Chevron /></DropBox></StrokeCtl>
              </StrokeRow>
              <StrokeRow>
                <StrokeLabel>Cap:</StrokeLabel>
                <StrokeCtl $gap={1}><IconBtn $on><Icon name="capButt" /></IconBtn><IconBtn><Icon name="capRound" /></IconBtn><IconBtn><Icon name="capSquare" /></IconBtn></StrokeCtl>
              </StrokeRow>
              <StrokeRow>
                <StrokeLabel>Miter Limit:</StrokeLabel>
                <StrokeCtl $gap={3}><MiniField $w={35}><Spinner /><FieldText>4</FieldText></MiniField>x</StrokeCtl>
              </StrokeRow>
              <StrokeRow>
                <StrokeLabel>Join:</StrokeLabel>
                <StrokeCtl $gap={1}><IconBtn $on><Icon name="joinMiter" /></IconBtn><IconBtn><Icon name="joinRound" /></IconBtn><IconBtn><Icon name="joinBevel" /></IconBtn></StrokeCtl>
              </StrokeRow>
              <StrokeRow>
                <StrokeLabel>Align Stroke:</StrokeLabel>
                <StrokeCtl $gap={1}><IconBtn $on><Icon name="alignIn" /></IconBtn><IconBtn><Icon name="alignCenter" /></IconBtn><IconBtn><Icon name="alignOut" /></IconBtn></StrokeCtl>
              </StrokeRow>
              <StrokeRow $mt={5}>
                <StrokeLabel>Type:</StrokeLabel>
                <StrokeCtl $gap={2}><MiniField $light $w={89}><StrokeBar /></MiniField><DropBox><Chevron /></DropBox></StrokeCtl>
              </StrokeRow>
              <StrokeRow>
                <StrokeLabel>Start/End:</StrokeLabel>
                <StrokeCtl>
                  <MiniField $light $w={27}><FieldText>None</FieldText></MiniField>
                  <DropBox><Chevron /></DropBox>
                  <IconBtn $w={26}><Icon name="swap" size={10} /></IconBtn>
                  <MiniField $light $w={26}><FieldText>None</FieldText></MiniField>
                  <DropBox $ml={2}><Chevron /></DropBox>
                </StrokeCtl>
              </StrokeRow>
              <StrokeRow>
                <StrokeLabel>Scale:</StrokeLabel>
                <StrokeCtl>
                  <MiniField $w={37}><Spinner /><FieldText>100%</FieldText></MiniField>
                  <IconBtn $w={26}><Icon name="chain" size={11} /></IconBtn>
                  <MiniField $w={37}><Spinner /><FieldText>100%</FieldText></MiniField>
                </StrokeCtl>
              </StrokeRow>
              <StrokeRow>
                <StrokeLabel>Align:</StrokeLabel>
                <StrokeCtl $gap={1}><IconBtn><Icon name="arrows" size={10} /></IconBtn><IconBtn $on><Icon name="swap" size={10} /></IconBtn></StrokeCtl>
              </StrokeRow>
              <StrokeRow>
                <StrokeLabel>Gap Color:</StrokeLabel>
                <StrokeCtl $gap={2}>
                  <MiniField $light $w={89}><GapSwatch /><FieldText $color="#9a9a9a">[None]</FieldText></MiniField>
                  <DropBox $clear><Chevron color="#8a8a8a" /></DropBox>
                </StrokeCtl>
              </StrokeRow>
              <StrokeRow>
                <StrokeLabel>Gap Tint:</StrokeLabel>
                <StrokeCtl><MiniField $w={32} $end $pr={2}><Chevron dir="right" color="#8a8a8a" /></MiniField></StrokeCtl>
              </StrokeRow>
            </StrokeBody>
          </Panel>
        </Dock>
      </Middle>

      <CursorSpot />
      <CursorArrow width="8" height="13" viewBox="0 0 8 13">
        <path d="M1 1 V10 L3 8 L4.5 11.5 L6 10.8 L4.6 7.6 L7 7.4 Z" fill="#fff" stroke="#333" strokeWidth="0.8" />
      </CursorArrow>

      <FloatBar>
        <FloatHandle />
        <FloatButton $w={72}><Icon name="frameX" size={12} />Add a Frame</FloatButton>
        <FloatButton $w={83}><Icon name="image" size={12} />Start with Image</FloatButton>
        <FloatIcon><Icon name="type" size={12} /></FloatIcon>
        <FloatIcon><Icon name="doc" size={12} /></FloatIcon>
        <FloatIcon><Icon name="docGear" size={12} /></FloatIcon>
        <FloatIcon><Icon name="dots" size={12} /></FloatIcon>
      </FloatBar>

      <Dialog>
        <DialogTitle>Create Guides</DialogTitle>
        <DialogBody>
          <DialogLeft>
            <GroupRow>
              <Group $w={103} $pt={1}>
                <Legend>Rows</Legend>
                <DlgSpin label="Number:" value="4" />
                <DlgSpin label="Gutter:" value="4 mm" active />
              </Group>
              <Group $w={105} $pt={1}>
                <Legend>Columns</Legend>
                <DlgSpin label="Number:" value="12" />
                <DlgSpin label="Gutter:" value="4 mm" />
              </Group>
            </GroupRow>
            <Group $w={216} $mt={12} $pb={4}>
              <Legend>Options</Legend>
              <OptionRow $pl={5} $mt={-1}>
                <OptionLabel>Fit Guides to:</OptionLabel>
                <Radio $on />Margins
              </OptionRow>
              <OptionRow $pl={58}><Radio />Page</OptionRow>
              <OptionRow $pl={5} $mt={2}><Check />Remove Existing Ruler Guides</OptionRow>
            </Group>
          </DialogLeft>
          <DialogButtons>
            <DlgButton $primary>OK</DlgButton>
            <DlgButton>Cancel</DlgButton>
            <PreviewRow>
              <Check $on>
                <Svg viewBox="0 0 8 8" width="7" height="7" fill="none" stroke="#444" strokeWidth="1.3"><path d="M1.5 4 L3.3 6 L6.5 2" /></Svg>
              </Check>
              Preview
            </PreviewRow>
          </DialogButtons>
        </DialogBody>
      </Dialog>
    </Shell>
  );
}
